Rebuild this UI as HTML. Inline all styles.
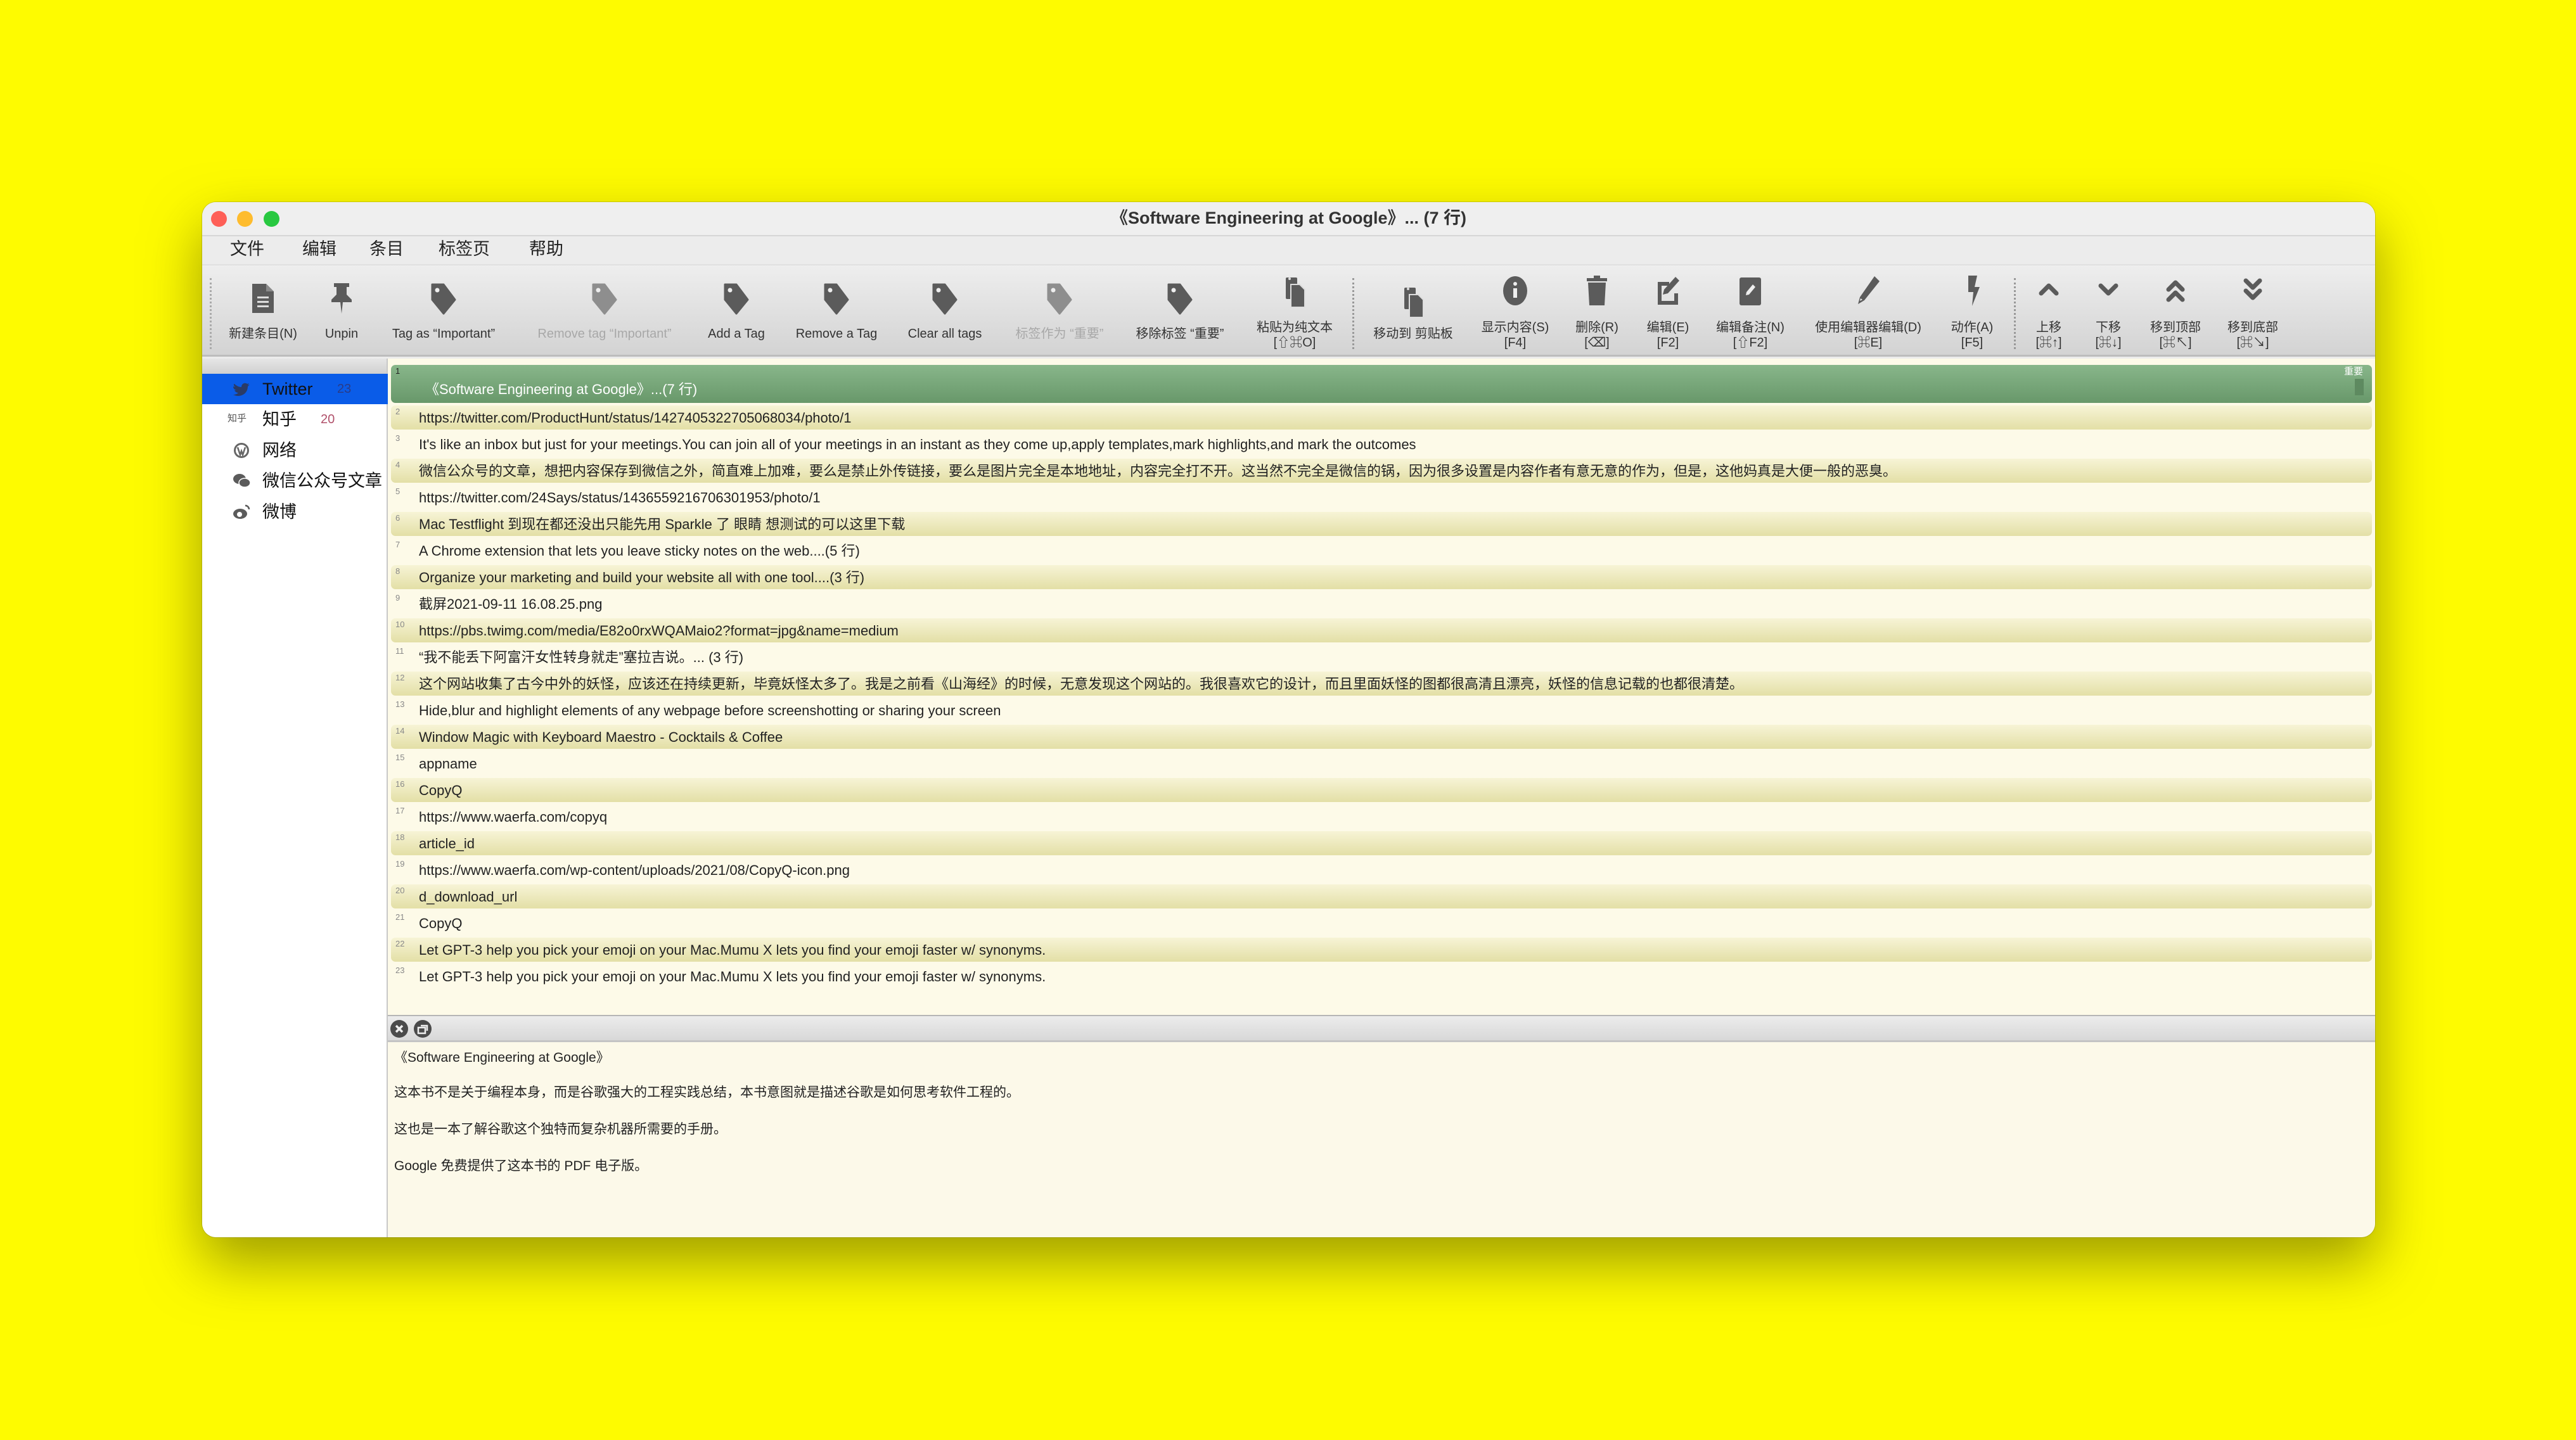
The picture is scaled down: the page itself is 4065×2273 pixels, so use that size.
<!DOCTYPE html>
<html><head><meta charset="utf-8">
<style>
*{margin:0;padding:0;box-sizing:border-box}
body{width:4065px;height:2273px;background:#fefb00;position:relative;overflow:hidden;font-family:"Liberation Sans","Noto Sans CJK SC",sans-serif;}
.win{position:absolute;left:319px;top:319px;width:3429px;height:1634px;border-radius:22px;overflow:hidden;background:#ececec;box-shadow:0 40px 90px rgba(80,80,0,0.55),0 0 0 1px rgba(0,0,0,0.15);}
.title{position:absolute;left:0;top:0;width:100%;height:54px;background:#efefef;border-bottom:2px solid #d6d6d6;}
.title .t{position:absolute;left:0;width:100%;top:9px;line-height:32px;text-align:center;font-size:27px;color:#333;font-weight:bold;}
.dot{position:absolute;top:14px;width:25px;height:25px;border-radius:50%}
.menu{position:absolute;left:0;top:54px;width:100%;height:46px;background:#ececec;border-bottom:2px solid #e0e0e0;}
.menu span{position:absolute;top:4px;line-height:32px;font-size:27px;color:#222}
.tb{position:absolute;left:0;top:100px;width:100%;height:144px;background:linear-gradient(#eeeeee,#d3d3d3);border-bottom:3px solid #bdbdbd;}
.it{position:absolute;width:300px;text-align:center;top:0;height:144px}
.it svg{position:absolute;left:126px;}
.it .l{position:absolute;left:0;width:300px;font-size:20px;color:#333;line-height:24px;white-space:nowrap}
.it.dis .l{color:#a8a8a8}
.sep{position:absolute;top:20px;height:112px;border-left:3px dotted #999;}
.side{position:absolute;left:0;top:247px;width:293px;height:1387px;background:#fff;border-right:2px solid #c8c8c8;}
.side .hd{height:24px;background:linear-gradient(#e6e6e6,#d0d0d0);}
.side .row{position:absolute;left:0;width:293px;height:48px;font-size:27px;color:#111;}
.side .row .n{position:absolute;left:95px;top:8px;line-height:32px;white-space:nowrap}
.side .row .c{position:absolute;top:12px;font-size:20px;line-height:24px}
.side .row svg{position:absolute;left:48px;top:10px}
.list{position:absolute;left:293px;top:247px;width:3136px;height:1036px;background:#fdfae8;}
.r{position:absolute;left:5px;width:3126px;height:38px;border-radius:7px;font-size:22px;color:#222;white-space:nowrap;line-height:26px}
.r.b{background:linear-gradient(#f7f4d6,#e3dfa6);}
.r .num{position:absolute;left:7px;top:2px;font-size:13px;line-height:16px;color:#888}
.r .tx{position:absolute;left:44px;top:7px}
.pbar{position:absolute;left:293px;top:1283px;width:3136px;height:43px;background:linear-gradient(#ececec,#d8d8d8);border-top:2px solid #b5b5b5;border-bottom:3px solid #c4c4c4;}
.det{position:absolute;left:293px;top:1326px;width:3136px;height:308px;background:#fcf9e9;font-size:21px;color:#222;line-height:26px}
.det div{position:absolute;left:10px;white-space:nowrap}
</style></head><body>
<div class="win">
 <div class="title">
  <div class="dot" style="left:14px;background:#fe5f57"></div>
  <div class="dot" style="left:55px;background:#febc2e"></div>
  <div class="dot" style="left:97px;background:#28c840"></div>
  <div class="t">《Software Engineering at Google》... (7 行)</div>
 </div>
 <div class="menu">
  <span style="left:44px">文件</span><span style="left:158px">编辑</span><span style="left:264px">条目</span><span style="left:373px">标签页</span><span style="left:516px">帮助</span>
 </div>
 <div class="tb">
  <div class="sep" style="left:12px;border-left-color:#aaa"></div>
  <div class="it" style="left:-54px"><svg width="48" height="52" viewBox="0 0 48 52" style="top:26px"><path d="M7 3h22l12 12v34H7z" fill="#5b5b5b"/><path d="M29 3v12h12" fill="#8a8a8a"/><rect x="15" y="23" width="18" height="3" fill="#ddd"/><rect x="15" y="30" width="18" height="3" fill="#ddd"/><rect x="15" y="37" width="18" height="3" fill="#ddd"/></svg><div class="l" style="top:96px">新建条目(N)</div></div>
  <div class="it" style="left:70px"><svg width="48" height="52" viewBox="0 0 48 52" style="top:26px"><path d="M12 2h24v6h-4v12l8 8v4H8v-4l8-8V8h-4z" fill="#5b5b5b"/><path d="M22 32h4l-2 18z" fill="#5b5b5b"/></svg><div class="l" style="top:96px">Unpin</div></div>
  <div class="it" style="left:231px"><svg width="48" height="52" viewBox="0 0 48 52" style="top:26px"><path d="M6 4h18l18 24-18 22L6 28z" fill="#5b5b5b" stroke="#5b5b5b" stroke-width="3" stroke-linejoin="round"/><circle cx="14" cy="13" r="3.5" fill="#eee"/></svg><div class="l" style="top:96px">Tag as “Important”</div></div>
  <div class="it dis" style="left:485px"><svg width="48" height="52" viewBox="0 0 48 52" style="top:26px"><path d="M6 4h18l18 24-18 22L6 28z" fill="#8e8e8e" stroke="#8e8e8e" stroke-width="3" stroke-linejoin="round"/><circle cx="14" cy="13" r="3.5" fill="#eee"/></svg><div class="l" style="top:96px">Remove tag “Important”</div></div>
  <div class="it" style="left:693px"><svg width="48" height="52" viewBox="0 0 48 52" style="top:26px"><path d="M6 4h18l18 24-18 22L6 28z" fill="#5b5b5b" stroke="#5b5b5b" stroke-width="3" stroke-linejoin="round"/><circle cx="14" cy="13" r="3.5" fill="#eee"/></svg><div class="l" style="top:96px">Add a Tag</div></div>
  <div class="it" style="left:851px"><svg width="48" height="52" viewBox="0 0 48 52" style="top:26px"><path d="M6 4h18l18 24-18 22L6 28z" fill="#5b5b5b" stroke="#5b5b5b" stroke-width="3" stroke-linejoin="round"/><circle cx="14" cy="13" r="3.5" fill="#eee"/></svg><div class="l" style="top:96px">Remove a Tag</div></div>
  <div class="it" style="left:1022px"><svg width="48" height="52" viewBox="0 0 48 52" style="top:26px"><path d="M6 4h18l18 24-18 22L6 28z" fill="#5b5b5b" stroke="#5b5b5b" stroke-width="3" stroke-linejoin="round"/><circle cx="14" cy="13" r="3.5" fill="#eee"/></svg><div class="l" style="top:96px">Clear all tags</div></div>
  <div class="it dis" style="left:1203px"><svg width="48" height="52" viewBox="0 0 48 52" style="top:26px"><path d="M6 4h18l18 24-18 22L6 28z" fill="#8e8e8e" stroke="#8e8e8e" stroke-width="3" stroke-linejoin="round"/><circle cx="14" cy="13" r="3.5" fill="#eee"/></svg><div class="l" style="top:96px">标签作为 “重要”</div></div>
  <div class="it" style="left:1393px"><svg width="48" height="52" viewBox="0 0 48 52" style="top:26px"><path d="M6 4h18l18 24-18 22L6 28z" fill="#5b5b5b" stroke="#5b5b5b" stroke-width="3" stroke-linejoin="round"/><circle cx="14" cy="13" r="3.5" fill="#eee"/></svg><div class="l" style="top:96px">移除标签 “重要”</div></div>
  <div class="it" style="left:1574px"><svg width="48" height="52" viewBox="0 0 48 52" style="top:16px"><rect x="10" y="3" width="18" height="34" rx="2" fill="#5b5b5b"/><circle cx="16" cy="5" r="2" fill="#ddd"/><path d="M18 14h14l8 8v28H18z" fill="#5b5b5b" stroke="#ddd" stroke-width="2"/></svg><div class="l" style="top:86px">粘贴为纯文本<br>[⇧⌘O]</div></div>
  <div class="sep" style="left:1815px"></div>
  <div class="it" style="left:1761px"><svg width="48" height="52" viewBox="0 0 48 52" style="top:32px"><rect x="10" y="3" width="18" height="34" rx="2" fill="#5b5b5b"/><circle cx="16" cy="5" r="2" fill="#ddd"/><path d="M18 14h14l8 8v28H18z" fill="#5b5b5b" stroke="#ddd" stroke-width="2"/></svg><div class="l" style="top:96px">移动到 剪贴板</div></div>
  <div class="it" style="left:1922px"><svg width="48" height="52" viewBox="0 0 48 52" style="top:14px"><ellipse cx="24" cy="26" rx="19" ry="23" fill="#5b5b5b"/><circle cx="24" cy="15" r="3" fill="#eee"/><rect x="21" y="22" width="6" height="15" fill="#eee"/></svg><div class="l" style="top:86px">显示内容(S)<br>[F4]</div></div>
  <div class="it" style="left:2051px"><svg width="48" height="52" viewBox="0 0 48 52" style="top:14px"><rect x="8" y="6" width="32" height="5" fill="#5b5b5b"/><rect x="19" y="2" width="10" height="5" fill="#5b5b5b"/><path d="M10 13h28l-2 36H12z" fill="#5b5b5b"/></svg><div class="l" style="top:86px">删除(R)<br>[⌫]</div></div>
  <div class="it" style="left:2163px"><svg width="48" height="52" viewBox="0 0 48 52" style="top:14px"><path d="M8 12h18v6H14v24h20V30h6v18H8z" fill="#5b5b5b"/><path d="M36 4l6 6-18 20-8 2 2-8z" fill="#5b5b5b"/></svg><div class="l" style="top:86px">编辑(E)<br>[F2]</div></div>
  <div class="it" style="left:2293px"><svg width="48" height="52" viewBox="0 0 48 52" style="top:14px"><rect x="7" y="5" width="34" height="44" rx="3" fill="#5b5b5b"/><path d="M28 16l4 4-10 12-5 1 1-5z" fill="#eee"/></svg><div class="l" style="top:86px">编辑备注(N)<br>[⇧F2]</div></div>
  <div class="it" style="left:2479px"><svg width="48" height="52" viewBox="0 0 48 52" style="top:14px"><path d="M34 3l8 8-24 30-10 6 3-11z" fill="#5b5b5b"/><path d="M15 40l-4 2 1-4z" fill="#eee"/></svg><div class="l" style="top:86px">使用编辑器编辑(D)<br>[⌘E]</div></div>
  <div class="it" style="left:2643px"><svg width="48" height="52" viewBox="0 0 48 52" style="top:14px"><path d="M18 2h14l-4 18h8L24 50l2-22h-8z" fill="#5b5b5b"/></svg><div class="l" style="top:86px">动作(A)<br>[F5]</div></div>
  <div class="sep" style="left:2859px"></div>
  <div class="it" style="left:2764px"><svg width="48" height="52" viewBox="0 0 48 52" style="top:14px"><path d="M12 30l12-12 12 12" fill="none" stroke="#5b5b5b" stroke-width="7" stroke-linecap="round" stroke-linejoin="round"/></svg><div class="l" style="top:86px">上移<br>[⌘↑]</div></div>
  <div class="it" style="left:2858px"><svg width="48" height="52" viewBox="0 0 48 52" style="top:14px"><path d="M12 18l12 12 12-12" fill="none" stroke="#5b5b5b" stroke-width="7" stroke-linecap="round" stroke-linejoin="round"/></svg><div class="l" style="top:86px">下移<br>[⌘↓]</div></div>
  <div class="it" style="left:2964px"><svg width="48" height="52" viewBox="0 0 48 52" style="top:14px"><path d="M13 24l11-11 11 11M13 40l11-11 11 11" fill="none" stroke="#5b5b5b" stroke-width="7" stroke-linecap="round" stroke-linejoin="round"/></svg><div class="l" style="top:86px">移到顶部<br>[⌘↖]</div></div>
  <div class="it" style="left:3086px"><svg width="48" height="52" viewBox="0 0 48 52" style="top:14px"><path d="M13 10l11 11 11-11M13 26l11 11 11-11" fill="none" stroke="#5b5b5b" stroke-width="7" stroke-linecap="round" stroke-linejoin="round"/></svg><div class="l" style="top:86px">移到底部<br>[⌘↘]</div></div>
 </div>
 <div class="side">
  <div class="hd"></div>
  <div class="row" style="top:24px;background:#0a5ce8"><svg width="28" height="28" viewBox="0 0 28 28"><path d="M3 6c3 3 7 5 11 5 0-5 5-8 9-5l3-1-2 3 3-1-3 3c0 9-7 15-15 15-3 0-6-1-8-2 3 0 6-1 8-3-3 0-5-2-6-4h3c-3-1-5-3-5-6l3 1c-2-2-3-5-1-5z" fill="#2a3b66"/></svg><span class="n">Twitter</span><span class="c" style="left:213px;color:#2a3b88">23</span></div>
  <div class="row" style="top:72px"><span style="position:absolute;left:40px;top:14px;font-size:15px;line-height:18px;color:#555">知乎</span><span class="n">知乎</span><span class="c" style="left:187px;color:#b0506a">20</span></div>
  <div class="row" style="top:121px"><svg width="28" height="28" viewBox="0 0 28 28"><circle cx="14" cy="14" r="12" fill="#666"/><circle cx="14" cy="14" r="9" fill="#fff"/><path d="M8 9l4 12 2-6 2 6 4-12" fill="none" stroke="#666" stroke-width="2.5"/></svg><span class="n">网络</span></div>
  <div class="row" style="top:169px"><svg width="30" height="28" viewBox="0 0 30 28"><ellipse cx="11" cy="11" rx="10" ry="8" fill="#5b5b5b"/><ellipse cx="19" cy="17" rx="9" ry="7" fill="#5b5b5b" stroke="#fff" stroke-width="1.5"/></svg><span class="n">微信公众号文章</span></div>
  <div class="row" style="top:218px"><svg width="30" height="28" viewBox="0 0 30 28"><ellipse cx="12" cy="17" rx="11" ry="8" fill="#5b5b5b"/><circle cx="11" cy="18" r="4" fill="#fff"/><path d="M20 4a6 6 0 0 1 6 6" fill="none" stroke="#5b5b5b" stroke-width="2.5"/></svg><span class="n">微博</span></div>
 </div>
 <div class="list">
  <div class="r" style="top:10px;height:60px;background:linear-gradient(#88b68a,#68986a);color:#fff"><span class="num" style="color:#222">1</span><span class="tx" style="top:26px;left:54px">《Software Engineering at Google》...(7 行)</span><span style="position:absolute;right:14px;top:2px;font-size:15px;line-height:18px">重要</span><span style="position:absolute;right:13px;top:22px;width:14px;height:26px;background:#5e8a60"></span></div>
  <div class="r b" style="top:74px"><span class="num">2</span><span class="tx">https://twitter.com/ProductHunt/status/1427405322705068034/photo/1</span></div>
  <div class="r" style="top:116px"><span class="num">3</span><span class="tx">It's like an inbox but just for your meetings.You can join all of your meetings in an instant as they come up,apply templates,mark highlights,and mark the outcomes</span></div>
  <div class="r b" style="top:158px"><span class="num">4</span><span class="tx">微信公众号的文章，想把内容保存到微信之外，简直难上加难，要么是禁止外传链接，要么是图片完全是本地地址，内容完全打不开。这当然不完全是微信的锅，因为很多设置是内容作者有意无意的作为，但是，这他妈真是大便一般的恶臭。</span></div>
  <div class="r" style="top:200px"><span class="num">5</span><span class="tx">https://twitter.com/24Says/status/1436559216706301953/photo/1</span></div>
  <div class="r b" style="top:242px"><span class="num">6</span><span class="tx">Mac Testflight 到现在都还没出只能先用 Sparkle 了 眼睛 想测试的可以这里下载</span></div>
  <div class="r" style="top:284px"><span class="num">7</span><span class="tx">A Chrome extension that lets you leave sticky notes on the web....(5 行)</span></div>
  <div class="r b" style="top:326px"><span class="num">8</span><span class="tx">Organize your marketing and build your website all with one tool....(3 行)</span></div>
  <div class="r" style="top:368px"><span class="num">9</span><span class="tx">截屏2021-09-11 16.08.25.png</span></div>
  <div class="r b" style="top:410px"><span class="num">10</span><span class="tx">https://pbs.twimg.com/media/E82o0rxWQAMaio2?format=jpg&amp;name=medium</span></div>
  <div class="r" style="top:452px"><span class="num">11</span><span class="tx">“我不能丢下阿富汗女性转身就走”塞拉吉说。... (3 行)</span></div>
  <div class="r b" style="top:494px"><span class="num">12</span><span class="tx">这个网站收集了古今中外的妖怪，应该还在持续更新，毕竟妖怪太多了。我是之前看《山海经》的时候，无意发现这个网站的。我很喜欢它的设计，而且里面妖怪的图都很高清且漂亮，妖怪的信息记载的也都很清楚。</span></div>
  <div class="r" style="top:536px"><span class="num">13</span><span class="tx">Hide,blur and highlight elements of any webpage before screenshotting or sharing your screen</span></div>
  <div class="r b" style="top:578px"><span class="num">14</span><span class="tx">Window Magic with Keyboard Maestro - Cocktails &amp; Coffee</span></div>
  <div class="r" style="top:620px"><span class="num">15</span><span class="tx">appname</span></div>
  <div class="r b" style="top:662px"><span class="num">16</span><span class="tx">CopyQ</span></div>
  <div class="r" style="top:704px"><span class="num">17</span><span class="tx">https://www.waerfa.com/copyq</span></div>
  <div class="r b" style="top:746px"><span class="num">18</span><span class="tx">article_id</span></div>
  <div class="r" style="top:788px"><span class="num">19</span><span class="tx">https://www.waerfa.com/wp-content/uploads/2021/08/CopyQ-icon.png</span></div>
  <div class="r b" style="top:830px"><span class="num">20</span><span class="tx">d_download_url</span></div>
  <div class="r" style="top:872px"><span class="num">21</span><span class="tx">CopyQ</span></div>
  <div class="r b" style="top:914px"><span class="num">22</span><span class="tx">Let GPT-3 help you pick your emoji on your Mac.Mumu X lets you find your emoji faster w/ synonyms.</span></div>
  <div class="r" style="top:956px"><span class="num">23</span><span class="tx">Let GPT-3 help you pick your emoji on your Mac.Mumu X lets you find your emoji faster w/ synonyms.</span></div>
 </div>
 <div class="pbar">
  <svg width="90" height="40" viewBox="0 0 90 40" style="position:absolute;left:2px;top:0"><circle cx="16" cy="20" r="14" fill="#4a4a4a"/><path d="M11 15l10 10M21 15l-10 10" stroke="#eee" stroke-width="3.5"/><circle cx="53" cy="20" r="14" fill="#4a4a4a"/><rect x="46" y="18" width="11" height="9" fill="none" stroke="#eee" stroke-width="2.5"/><path d="M50 15h10v8" fill="none" stroke="#eee" stroke-width="2.5"/></svg>
 </div>
 <div class="det">
  <div style="top:12px">《Software Engineering at Google》</div>
  <div style="top:67px">这本书不是关于编程本身，而是谷歌强大的工程实践总结，本书意图就是描述谷歌是如何思考软件工程的。</div>
  <div style="top:125px">这也是一本了解谷歌这个独特而复杂机器所需要的手册。</div>
  <div style="top:183px">Google 免费提供了这本书的 PDF 电子版。</div>
 </div>
</div>
</body></html>
